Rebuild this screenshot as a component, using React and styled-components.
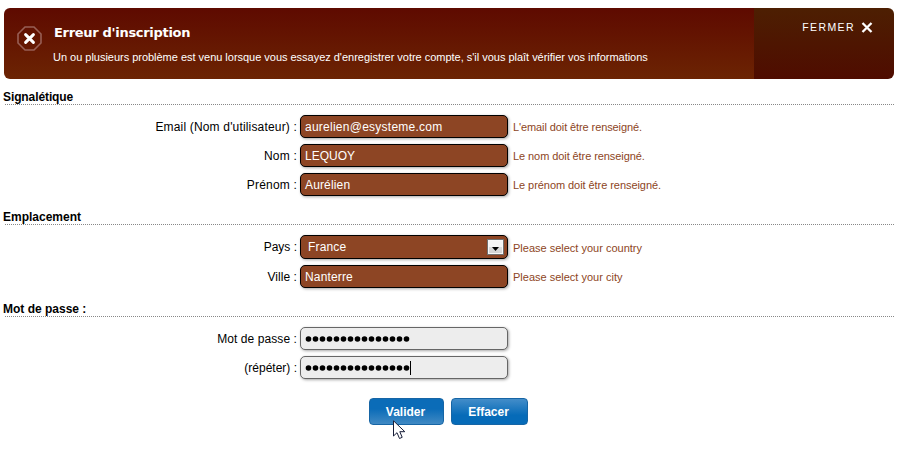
import React from "react";
import styled, { createGlobalStyle, css } from "styled-components";

const GlobalStyle = createGlobalStyle`
  * { box-sizing: border-box; }
  body {
    margin: 0;
    background: #fff;
    color: #000;
    font-family: "Liberation Sans", Arial, sans-serif;
    font-size: 12px;
  }
`;

const Page = styled.main`
  position: relative;
  width: 899px;
  height: 459px;
  padding: 8px 5px 0 4px;
  overflow: hidden;
`;

const Banner = styled.header`
  display: flex;
  height: 71px;
  border-radius: 6px;
  overflow: hidden;
  color: #fff;
`;

const Message = styled.div`
  display: flex;
  flex: 1;
  padding: 16px 0 0 13px;
  background: linear-gradient(#5e0a00, #6c2403);
`;

const ErrorIcon = styled.svg`
  width: 25px;
  height: 25px;
  margin: 2px 11px 0 0;
`;

const Title = styled.h1`
  margin: 0 0 0 1px;
  font: bold 13px/18px "DejaVu Sans", Verdana, sans-serif;
  letter-spacing: -0.3px;
`;

const Description = styled.p`
  margin: 8px 0 0;
  font-size: 11px;
  line-height: 14px;
  letter-spacing: -0.02px;
  white-space: nowrap;
`;

const ClosePanel = styled.div`
  display: flex;
  justify-content: flex-end;
  width: 140px;
  padding: 12px 21px 0 0;
  background: linear-gradient(#4d1f02, #4f0c00);
`;

const CloseButton = styled.button`
  display: flex;
  align-items: center;
  gap: 6px;
  height: 14px;
  padding: 0;
  border: 0;
  background: none;
  color: #fff;
  font: 10.5px/14px "Liberation Sans", Arial, sans-serif;
  letter-spacing: 1.4px;
`;

const SectionTitle = styled.h2`
  display: flex;
  align-items: flex-end;
  height: ${(p) => (p.$first ? 26 : 29)}px;
  margin: 0 0 10px -1px;
  padding-bottom: 1px;
  background: repeating-linear-gradient(90deg, #888 0 1px, #fff 1px 2px) 2px 100% / 100% 1px no-repeat;
  font-size: 12px;
  line-height: 14px;
  letter-spacing: ${(p) => p.$spacing}px;
`;

const Fields = styled.div`
  display: flex;
  flex-direction: column;
  gap: 6px;
`;

const Row = styled.div`
  display: grid;
  grid-template-columns: 293px 208px 1fr;
  align-items: center;
  column-gap: 3px;
`;

const Label = styled.label`
  text-align: right;
  line-height: 14px;
  letter-spacing: ${(p) => p.$spacing}px;
`;

const fieldBox = css`
  display: flex;
  align-items: center;
  height: ${(p) => (p.$tall ? 24 : 23)}px;
  border: 1px solid ${(p) => (p.$plain ? "#666" : "#000")};
  border-radius: 5px;
  background: ${(p) => (p.$plain ? "#ededed" : "#8d4524")};
  box-shadow: 1px 1px 3px rgba(0, 0, 0, 0.35);
  color: ${(p) => (p.$plain ? "#000" : "#fff")};
  line-height: 14px;
  letter-spacing: ${(p) => p.$spacing || 0}px;
`;

const TextField = styled.div`
  ${fieldBox}
  padding-left: 4px;
`;

const SelectField = styled.div`
  ${fieldBox}
  justify-content: space-between;
  padding: 0 3px 0 7px;
`;

const Arrow = styled.span`
  display: flex;
  align-items: flex-end;
  justify-content: center;
  width: 17px;
  height: 16px;
  padding-bottom: 3px;
  border: 1px solid #707070;
  background: linear-gradient(#f4f4f4 48%, #dcdcdc 52%, #d0d0d0);
  box-shadow: inset 0 0 0 1px #f7f7f7;
`;

const Hint = styled.span`
  padding: 1px 0 0 2px;
  color: #8d4524;
  font-size: 11px;
  line-height: 14px;
  letter-spacing: ${(p) => p.$spacing || 0}px;
`;

const Dots = styled.svg`
  width: 105px;
  height: 6px;
  margin-top: 1px;
`;

const Caret = styled.span`
  width: 1px;
  height: 14px;
  background: #000;
`;

const Actions = styled.div`
  display: flex;
  gap: 7px;
  margin: 19px 0 0 365px;
`;

const Button = styled.button`
  width: ${(p) => p.$width}px;
  height: 27px;
  padding: 0 2px 0 0;
  border: 1px solid #1665a5;
  border-radius: 4px;
  background: ${(p) =>
    p.$active
      ? "linear-gradient(#0b6cb8 40%, #4089c3)"
      : "linear-gradient(#438dc9, #066bb8 65%)"};
  color: #fff;
  font: bold 12px/14px "Liberation Sans", Arial, sans-serif;
`;

const Cursor = styled.svg`
  position: absolute;
  left: 393px;
  top: 420px;
  width: 13px;
  height: 20px;
`;

const identity = [
  { label: "Email (Nom d'utilisateur) :", ls: 0.17, value: "aurelien@esysteme.com", vs: 0.25, hint: "L'email doit être renseigné.", hs: -0.1 },
  { label: "Nom :", ls: 0.2, value: "LEQUOY", vs: 0, hint: "Le nom doit être renseigné.", hs: -0.08 },
  { label: "Prénom :", ls: 0.18, value: "Aurélien", vs: 0.15, hint: "Le prénom doit être renseigné.", hs: -0.06 },
];

function PasswordDots({ count }) {
  return (
    <Dots viewBox="0 0 105 6">
      {Array.from({ length: count }, (_, i) => (
        <circle key={i} cx={i * 7 + 3.5} cy="3" r="2.8" fill="#000" />
      ))}
    </Dots>
  );
}

export default function App() {
  return (
    <>
      <GlobalStyle />
      <Page>
        <Banner>
          <Message>
            <ErrorIcon viewBox="0 0 25 25" fill="none">
              <path d="M8 1H17L24 8V17L17 24H8L1 17V8Z" stroke="#985f55" strokeWidth="1.6" />
              <path d="M8.6 8.6L16.4 16.4M16.4 8.6L8.6 16.4" stroke="#fff" strokeWidth="3" strokeLinecap="round" />
            </ErrorIcon>
            <div>
              <Title>Erreur d'inscription</Title>
              <Description>
                Un ou plusieurs problème est venu lorsque vous essayez d'enregistrer votre compte, s'il vous plaît vérifier vos informations
              </Description>
            </div>
          </Message>
          <ClosePanel>
            <CloseButton>
              FERMER
              <svg width="12" height="11" viewBox="0 0 12 11">
                <path d="M1.5 1L10.5 10M10.5 1L1.5 10" stroke="#fff" strokeWidth="2.3" />
              </svg>
            </CloseButton>
          </ClosePanel>
        </Banner>

        <SectionTitle $first $spacing={-0.1}>Signalétique</SectionTitle>
        <Fields>
          {identity.map((f) => (
            <Row key={f.label}>
              <Label $spacing={f.ls}>{f.label}</Label>
              <TextField $spacing={f.vs}>{f.value}</TextField>
              <Hint $spacing={f.hs}>{f.hint}</Hint>
            </Row>
          ))}
        </Fields>

        <SectionTitle $spacing={0}>Emplacement</SectionTitle>
        <Fields>
          <Row>
            <Label $spacing={0}>Pays :</Label>
            <SelectField $tall $spacing={0.15}>
              France
              <Arrow>
                <svg width="7" height="4" viewBox="0 0 7 4">
                  <path d="M0 0H7L3.5 4Z" fill="#000" />
                </svg>
              </Arrow>
            </SelectField>
            <Hint>Please select your country</Hint>
          </Row>
          <Row>
            <Label $spacing={0.05}>Ville :</Label>
            <TextField $spacing={0.15}>Nanterre</TextField>
            <Hint>Please select your city</Hint>
          </Row>
        </Fields>

        <SectionTitle $spacing={0}>Mot de passe :</SectionTitle>
        <Fields>
          <Row>
            <Label $spacing={0.08}>Mot de passe :</Label>
            <TextField $plain><PasswordDots count={15} /></TextField>
          </Row>
          <Row>
            <Label $spacing={0}>(répéter) :</Label>
            <TextField $plain><PasswordDots count={15} /><Caret /></TextField>
          </Row>
        </Fields>

        <Actions>
          <Button $width={75} $active>Valider</Button>
          <Button $width={77}>Effacer</Button>
        </Actions>
        <Cursor viewBox="0 0 13 20">
          <path d="M.5 .8V16L4 12.7L6.5 18.5L9.2 17.3L6.8 11.7H11.8Z" fill="#fff" stroke="#171d38" />
        </Cursor>
      </Page>
    </>
  );
}
